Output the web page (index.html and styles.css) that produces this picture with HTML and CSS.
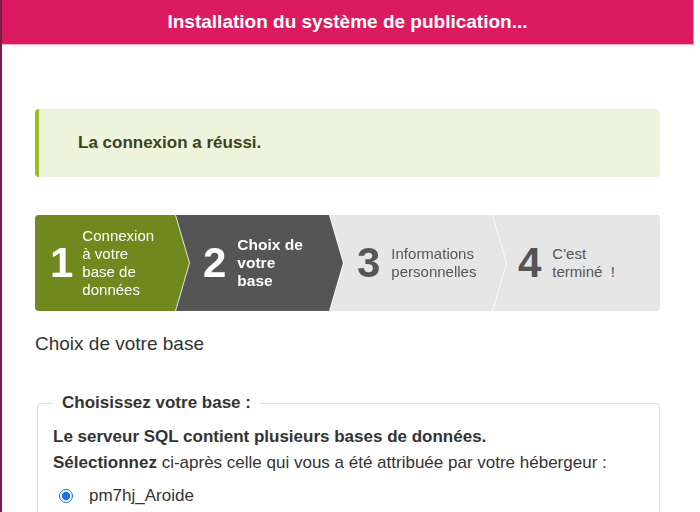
FILE: index.html
```html
<!DOCTYPE html>
<html lang="fr">
<head>
<meta charset="utf-8">
<title>Installation</title>
<link rel="stylesheet" href="styles.css">
</head>
<body>
<div class="page">
  <header class="topbar">Installation du système de publication...</header>
  <main class="content">
    <div class="success">La connexion a réussi.</div>

    <div class="steps">
      <div class="step step-done">
        <div class="step-body">
          <span class="num">1</span>
          <span class="label">Connexion<br>à votre<br>base de<br>données</span>
        </div>
      </div>
      <div class="step step-current">
        <div class="step-body">
          <span class="num">2</span>
          <span class="label">Choix de<br>votre<br>base</span>
        </div>
      </div>
      <div class="step step-todo">
        <div class="step-body">
          <span class="num">3</span>
          <span class="label">Informations<br>personnelles</span>
        </div>
      </div>
      <div class="step step-todo step-last">
        <div class="step-body">
          <span class="num">4</span>
          <span class="label">C'est<br>terminé&nbsp;&nbsp;!</span>
        </div>
      </div>
    </div>

    <h2 class="title">Choix de votre base</h2>

    <fieldset class="box">
      <legend>Choisissez votre base :</legend>
      <p class="intro"><strong>Le serveur SQL contient plusieurs bases de données.</strong><br><strong>Sélectionnez</strong> ci-après celle qui vous a été attribuée par votre hébergeur :</p>
      <label class="choice"><input type="radio" name="base" checked> <span>pm7hj_Aroide</span></label>
    </fieldset>
  </main>
</div>
</body>
</html>
```
FILE: styles.css
```css
* { box-sizing: border-box; }
html, body { margin: 0; padding: 0; background: #fff; }
body {
  font-family: "Liberation Sans", Arial, sans-serif;
  color: #333;
  height: 512px;
  overflow: hidden;
}
.page {
  width: 694px;
  min-height: 512px;
  border-left: 2px solid #7b1d48;
}
.topbar {
  height: 45px;
  background: #dc1a60;
  border-bottom: 1px solid #f7a6c4;
  border-right: 1px solid #f08ab0;
  color: #fff;
  font-weight: bold;
  font-size: 19px;
  display: flex;
  align-items: center;
  justify-content: center;
  padding-bottom: 1px;
}
.content {
  padding: 64px 34px 0 33px;
}
.success {
  height: 68px;
  background: #eef3dc;
  border-left: 4px solid #9dbd2c;
  border-radius: 4px;
  padding-left: 39px;
  display: flex;
  align-items: center;
  font-size: 17px;
  font-weight: bold;
  color: #3a4220;
}
.steps {
  margin-top: 38px;
  height: 96px;
  display: flex;
  border-radius: 4px;
  overflow: hidden;
  background: #e6e6e6;
}
.step {
  margin-right: -14px;
  filter: drop-shadow(1px 0 0 rgba(255,255,255,0.85));
}
.step:nth-child(1) { z-index: 4; width: 154px; }
.step:nth-child(2) { z-index: 3; width: 168px; }
.step:nth-child(3) { z-index: 2; width: 177px; }
.step:nth-child(4) { z-index: 1; flex: 1; margin-right: 0; filter: none; }
.step-body {
  height: 96px;
  display: flex;
  align-items: center;
  gap: 11px;
  padding-left: 28px;
  clip-path: polygon(0 0, calc(100% - 14px) 0, 100% 50%, calc(100% - 14px) 100%, 0 100%);
}
.step-last .step-body { clip-path: none; padding-left: 26px; }
.step-done .step-body { background: #6f891e; color: #fff; padding-left: 15px; gap: 9px; }
.step-current .step-body { background: #555555; color: #fff; }
.step-todo .step-body { background: #e6e6e6; color: #555; }
.num {
  font-size: 42px;
  font-weight: bold;
  line-height: 1;
}
.label {
  font-size: 15px;
  line-height: 18px;
}
.step-current .label { font-size: 15.5px; font-weight: bold; }
.title {
  margin: 22px 0 0 0;
  font-size: 19px;
  line-height: 22px;
  font-weight: normal;
  color: #333;
}
.box {
  margin: 38px 0 0 2px;
  padding: 0 15px 20px 15px;
  border: 1px solid #dcdcdc;
  border-radius: 4px;
  min-height: 140px;
}
.box legend {
  padding: 0 9px;
  font-size: 17px;
  line-height: 20px;
  font-weight: bold;
  color: #333;
}
.intro {
  margin: 11px 0 0 0;
  font-size: 17px;
  line-height: 26px;
  color: #333;
}
.choice {
  margin-top: 7px;
  height: 26px;
  display: flex;
  align-items: center;
  gap: 16px;
  font-size: 17px;
  padding-left: 6px;
}
.choice input {
  margin: 0;
  width: 14px;
  height: 14px;
  accent-color: #1a73e8;
}
```
